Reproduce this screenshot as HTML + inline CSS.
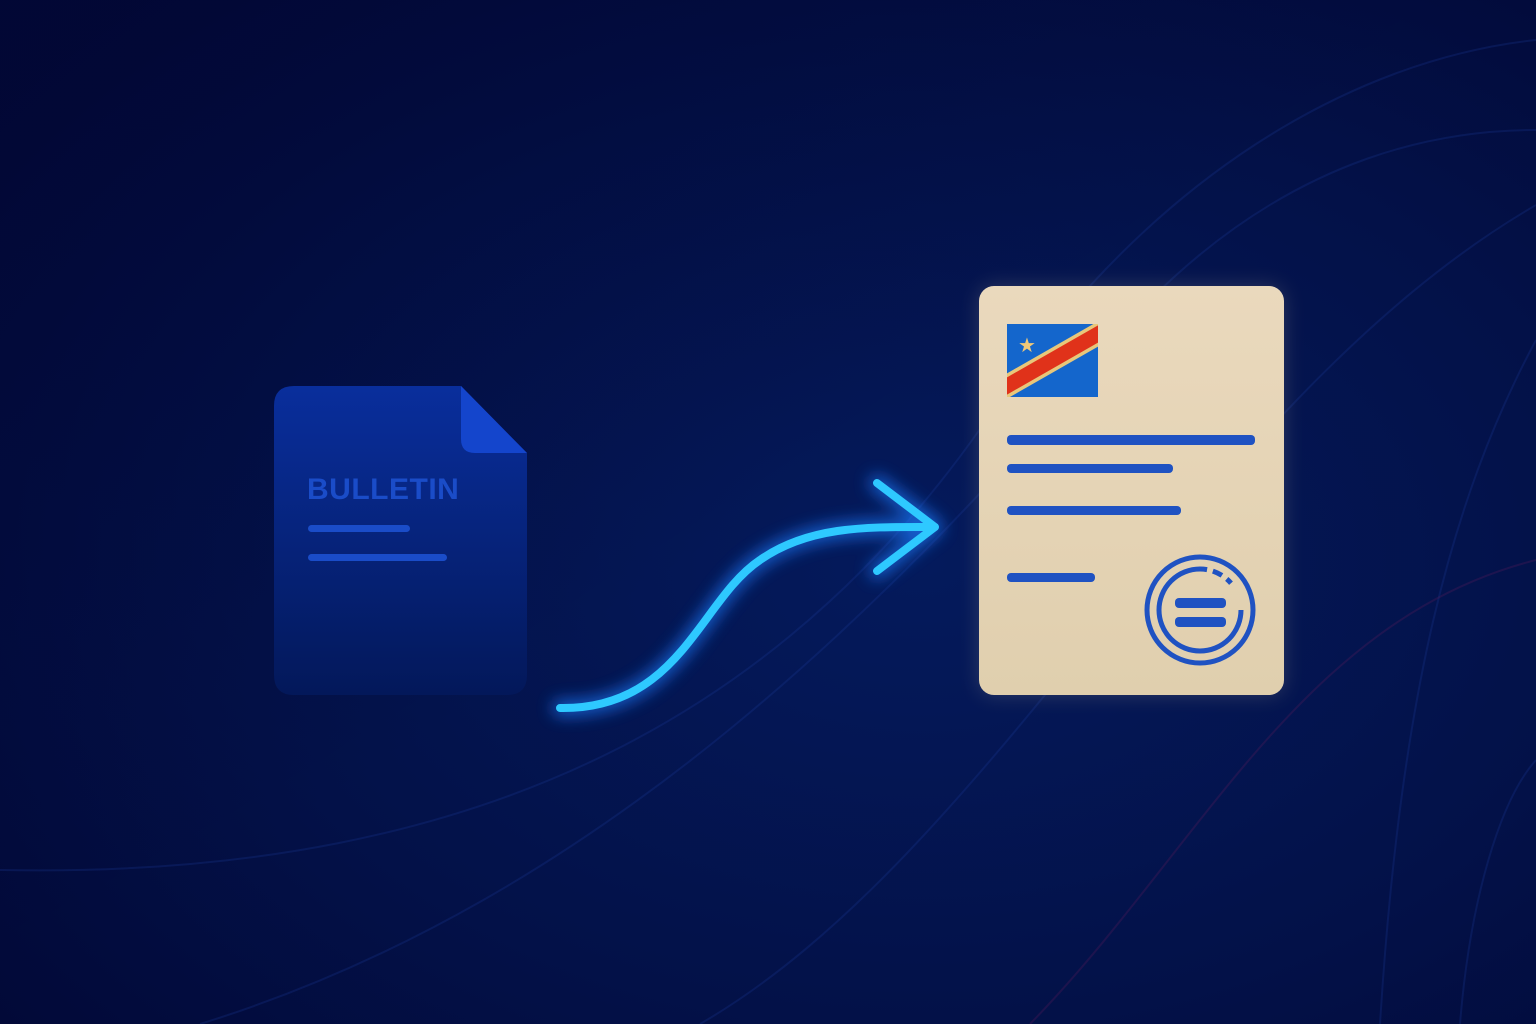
<!DOCTYPE html>
<html><head><meta charset="utf-8"><style>
html,body{margin:0;padding:0;width:1536px;height:1024px;overflow:hidden;background:#020b3e;}
</style></head><body>
<svg width="1536" height="1024" viewBox="0 0 1536 1024" xmlns="http://www.w3.org/2000/svg">
<defs>
<radialGradient id="bg" cx="0.6" cy="0.55" r="0.75">
<stop offset="0" stop-color="#041a5c"/><stop offset="0.6" stop-color="#031148"/><stop offset="1" stop-color="#020938"/>
</radialGradient>
<linearGradient id="tl" x1="0" y1="0" x2="1" y2="1">
<stop offset="0" stop-color="#010633" stop-opacity="0.6"/><stop offset="0.5" stop-color="#010633" stop-opacity="0"/>
</linearGradient>
<linearGradient id="doc" x1="0" y1="0" x2="0" y2="1">
<stop offset="0" stop-color="#092e9c"/><stop offset="1" stop-color="#03185a"/>
</linearGradient>
<linearGradient id="card" x1="0" y1="0" x2="0" y2="1">
<stop offset="0" stop-color="#ead9bd"/><stop offset="1" stop-color="#e0cfae"/>
</linearGradient>
<filter id="glow" x="-50%" y="-50%" width="200%" height="200%"><feGaussianBlur stdDeviation="8"/></filter>
<filter id="glow2" x="-20%" y="-20%" width="140%" height="140%"><feGaussianBlur stdDeviation="10"/></filter>
</defs>
<rect width="1536" height="1024" fill="url(#bg)"/>
<rect width="1536" height="1024" fill="url(#tl)"/>
<g fill="none" stroke="#1a3a9a" stroke-opacity="0.25" stroke-width="2">
<path d="M0 870 C500 880 800 700 1000 400 C1150 180 1350 60 1536 40"/>
<path d="M200 1024 C600 900 900 600 1150 300 C1300 150 1450 130 1536 130"/>
<path d="M700 1024 C1000 850 1200 400 1536 205"/>
<path d="M1380 1024 C1400 700 1450 500 1536 340"/>
<path d="M1460 1024 C1470 900 1500 800 1536 760"/>
</g>
<path d="M1030 1024 C1200 850 1300 620 1536 560" fill="none" stroke="#6a1a5a" stroke-opacity="0.25" stroke-width="2"/>
<path d="M294 386 H461 L527 453 V675 Q527 695 507 695 H294 Q274 695 274 675 V406 Q274 386 294 386 Z" fill="url(#doc)"/>
<path d="M461 386 L527 453 H475 Q461 453 461 439 Z" fill="#1445cc"/>
<text x="307" y="499" font-family="Liberation Sans, sans-serif" font-weight="bold" font-size="30" fill="#1a4cc8" letter-spacing="0.5">BULLETIN</text>
<rect x="308" y="525" width="102" height="7" rx="3.5" fill="#1a4cc8"/>
<rect x="308" y="554" width="139" height="7" rx="3.5" fill="#1a4cc8"/>
<g fill="none" stroke-linecap="round" stroke-linejoin="round">
<path d="M560 708 C680 710 700 600 760 560 C810 525 870 527 935 527 M877 483 L935 527 L877 571" stroke="#1a7cff" stroke-width="16" filter="url(#glow)" opacity="0.7"/>
<path d="M560 708 C680 710 700 600 760 560 C810 525 870 527 935 527 M877 483 L935 527 L877 571" stroke="#2ec9ff" stroke-width="8"/>
</g>
<rect x="979" y="286" width="305" height="409" rx="15" fill="#d9c7a3" opacity="0.2" filter="url(#glow2)"/>
<rect x="979" y="286" width="305" height="409" rx="15" fill="url(#card)"/>
<clipPath id="fc"><rect x="1007" y="324" width="91" height="73"/></clipPath>
<g clip-path="url(#fc)">
<rect x="1007" y="324" width="91" height="73" fill="#1466cc"/>
<path d="M1000 390 L1105 330" stroke="#e8c77a" stroke-width="22"/>
<path d="M1000 390 L1105 330" stroke="#e0321a" stroke-width="15"/>
</g>
<text x="1027" y="352" font-size="20" fill="#f0c878" text-anchor="middle" font-family="DejaVu Sans, sans-serif">★</text>
<g fill="#1f52c2">
<rect x="1007" y="435" width="248" height="10" rx="4"/>
<rect x="1007" y="464" width="166" height="9" rx="4"/>
<rect x="1007" y="506" width="174" height="9" rx="4"/>
<rect x="1007" y="573" width="88" height="9" rx="4"/>
<rect x="1175" y="598" width="51" height="10" rx="4"/>
<rect x="1175" y="617" width="51" height="10" rx="4"/>
</g>
<circle cx="1200" cy="610" r="53" fill="none" stroke="#1f52c2" stroke-width="5"/>
<circle cx="1200" cy="610" r="41" fill="none" stroke="#1f52c2" stroke-width="5" stroke-dasharray="200 6 10 6 6 50"/>
</svg>
</body></html>
